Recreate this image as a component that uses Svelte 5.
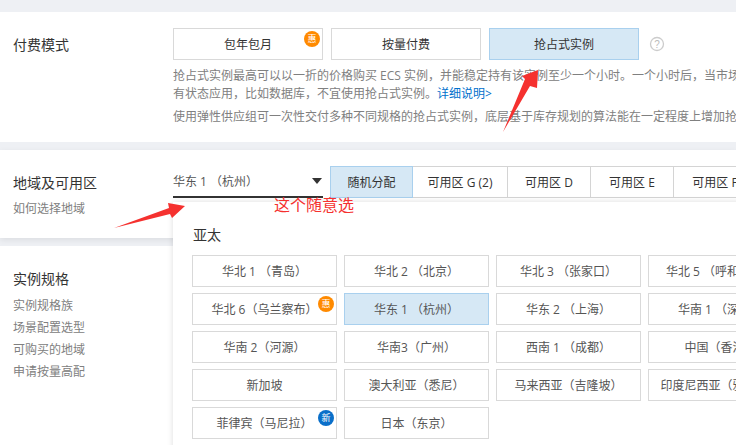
<script>
  const regions = [
    { name: '华北 1 （青岛）' }, { name: '华北 2 （北京）' }, { name: '华北 3 （张家口）' }, { name: '华北 5 （呼和浩特）' },
    { name: '华北 6（乌兰察布）', badge: 'hui' }, { name: '华东 1 （杭州）', active: true }, { name: '华东 2 （上海）' }, { name: '华南 1 （深圳）' },
    { name: '华南 2（河源）' }, { name: '华南3（广州）' }, { name: '西南 1 （成都）' }, { name: '中国（香港）' },
    { name: '新加坡' }, { name: '澳大利亚（悉尼）' }, { name: '马来西亚（吉隆坡）' }, { name: '印度尼西亚（雅加达）' },
    { name: '菲律宾（马尼拉）', badge: 'xin' }, { name: '日本（东京）' }
  ];
  const zones = [
    { name: '随机分配', w: 83, active: true },
    { name: '可用区 G (2)', w: 95 },
    { name: '可用区 D', w: 83 },
    { name: '可用区 E', w: 83 },
    { name: '可用区 F', w: 83 }
  ];
  const links = ['实例规格族', '场景配置选型', '可购买的地域', '申请按量高配'];
</script>

<div class="page">
  <section class="card first">
    <div class="label">付费模式</div>
    <div class="body">
      <div class="modes">
        <div class="btn">包年包月<span class="badge hui">惠</span></div>
        <div class="btn">按量付费</div>
        <div class="btn active">抢占式实例</div>
        <svg class="help" width="16" height="16" viewBox="0 0 16 16">
          <circle cx="8" cy="8" r="6.5" fill="none" stroke="#ccc" stroke-width="1.3" />
          <text x="8" y="11.5" text-anchor="middle" class="qm">?</text>
        </svg>
      </div>
      <p class="desc one">抢占式实例最高可以以一折的价格购买 ECS 实例，并能稳定持有该实例至少一个小时。一个小时后，当市场价格高于您的出价或资源供需关系变化时，实例会被自动释放，请勿在抢占式实例上运行</p>
      <p class="desc">有状态应用，比如数据库，不宜使用抢占式实例。<span class="more">详细说明&gt;</span></p>
      <p class="desc third">使用弹性供应组可一次性交付多种不同规格的抢占式实例，底层基于库存规划的算法能在一定程度上增加抢占式实例的持有时长</p>
    </div>
  </section>

  <section class="card second">
    <div class="label">
      地域及可用区
      <div class="sub">如何选择地域</div>
    </div>
    <div class="body row">
      <div class="select">
        <span>华东 1 （杭州）</span>
        <i class="caret"></i>
      </div>
      <div class="zones">
        {#each zones as z}
          <div class="zone" class:active={z.active} style="width:{z.w}px">{z.name}</div>
        {/each}
      </div>
    </div>
  </section>

  <section class="card third-card">
    <div class="label">
      实例规格
      <ul>
        {#each links as l}<li>{l}</li>{/each}
      </ul>
    </div>
  </section>

  <div class="panel">
    <h4>亚太</h4>
    <div class="grid">
      {#each regions as r}
        <div class="region" class:active={r.active}>
          {r.name}
          {#if r.badge === 'hui'}<span class="badge hui">惠</span>{/if}
          {#if r.badge === 'xin'}<span class="badge xin">新</span>{/if}
        </div>
      {/each}
    </div>
  </div>

  <svg class="marks" width="736" height="445" viewBox="0 0 736 445">
    <polygon fill="#f5312f" points="503,132 530,86 537,88 538,70 522,76 525,79" />
    <polygon fill="#f5312f" points="114,228 170,214 172,218 185,206 168,203 169,208" />
  </svg>
  <div class="note">这个随意选</div>
</div>

<style>
  :global(body) {
    margin: 0;
  }
  .page {
    position: relative;
    width: 736px;
    height: 445px;
    overflow: hidden;
    background: #eef0f4;
    padding-top: 12px;
    box-sizing: border-box;
    font-family: "Open Sans", "Noto Sans CJK SC", sans-serif;
    font-size: 12px;
    color: #333;
  }
  .card {
    display: flex;
    background: #fff;
    padding-left: 13px;
    box-sizing: border-box;
  }
  .first {
    height: 130px;
    padding-top: 16px;
    margin-bottom: 8px;
  }
  .second {
    height: 88px;
    padding-top: 16px;
    margin-bottom: 8px;
    box-shadow: 0 2px 6px rgba(0, 0, 0, 0.08);
    position: relative;
  }
  .third-card {
    height: 199px;
    padding-top: 16px;
  }
  .label {
    width: 160px;
    flex: none;
    font-size: 14px;
    line-height: 34px;
    color: #333;
  }
  .sub {
    font-size: 12px;
    line-height: 18px;
    color: #808080;
    margin-top: 0;
  }
  .body {
    flex: none;
    width: 563px;
    overflow: hidden;
  }
  .modes {
    display: flex;
    gap: 8px;
    align-items: center;
  }
  .btn {
    position: relative;
    width: 150px;
    height: 32px;
    box-sizing: border-box;
    border: 1px solid #d9d9d9;
    display: flex;
    align-items: center;
    justify-content: center;
    color: #333;
  }
  .btn.active {
    background: #d6e8f5;
    border-color: #a9d0ee;
  }
  .help {
    margin-left: 2px;
  }
  .qm {
    font-size: 10px;
    fill: #bbb;
    font-family: "Liberation Sans", sans-serif;
  }
  .badge {
    position: absolute;
    top: 2px;
    right: 2px;
    width: 16px;
    height: 16px;
    border-radius: 50%;
    color: #fff;
    font-size: 9px;
    line-height: 16px;
    text-align: center;
  }
  .hui {
    background: #ff8a00;
  }
  .xin {
    background: #0a6fc9;
  }
  .desc {
    margin: 0;
    font-size: 12px;
    line-height: 18px;
    color: #808080;
    white-space: nowrap;
  }
  .one {
    margin-top: 7px;
  }
  .third {
    margin-top: 5px;
  }
  .more {
    color: #0070cc;
  }
  .row {
    display: flex;
    gap: 7px;
    align-items: flex-start;
  }
  .select {
    width: 150px;
    height: 32px;
    box-sizing: border-box;
    flex: none;
    border-bottom: 2px solid #333;
    display: flex;
    align-items: center;
    justify-content: space-between;
    color: #555;
  }
  .caret {
    width: 0;
    height: 0;
    border-left: 5px solid transparent;
    border-right: 5px solid transparent;
    border-top: 6px solid #333;
    margin-right: 1px;
  }
  .zones {
    display: flex;
    flex: none;
    height: 32px;
    box-sizing: border-box;
    border-top: 1px solid #d4d4d4;
    border-bottom: 1px solid #d4d4d4;
  }
  .zone {
    box-sizing: border-box;
    flex: none;
    display: flex;
    align-items: center;
    justify-content: center;
    border-right: 1px solid #d4d4d4;
    color: #333;
    padding-bottom: 1px;
  }
  .zone.active {
    background: #d6e8f5;
    border: 1px solid #a9d0ee;
    margin: -1px 0;
    padding-bottom: 0;
  }
  ul {
    list-style: none;
    margin: -1px 0 0;
    padding: 0;
    font-size: 12px;
    line-height: 22px;
    color: #808080;
  }
  .panel {
    position: absolute;
    left: 173px;
    top: 202px;
    right: -40px;
    bottom: -40px;
    background: #fff;
    box-shadow: 0 0 6px rgba(0, 0, 0, 0.14);
    padding: 21px 19px 19px;
    overflow: hidden;
  }
  h4 {
    margin: 0 0 8px;
    padding-left: 1px;
    font-weight: 400;
    font-size: 14px;
    line-height: 24px;
    color: #333;
  }
  .grid {
    display: grid;
    grid-template-columns: repeat(4, 145px);
    grid-auto-rows: 32px;
    column-gap: 7px;
    row-gap: 6px;
  }
  .region {
    position: relative;
    box-sizing: border-box;
    border: 1px solid #d9d9d9;
    display: flex;
    align-items: center;
    justify-content: center;
    white-space: nowrap;
    color: #555;
  }
  .region.active {
    background: #d6e8f5;
    border-color: #a9d0ee;
  }
  .marks {
    position: absolute;
    left: 0;
    top: 0;
    pointer-events: none;
  }
  .note {
    position: absolute;
    left: 274px;
    top: 194px;
    font-size: 16px;
    line-height: 23px;
    color: #f5312f;
  }
</style>
